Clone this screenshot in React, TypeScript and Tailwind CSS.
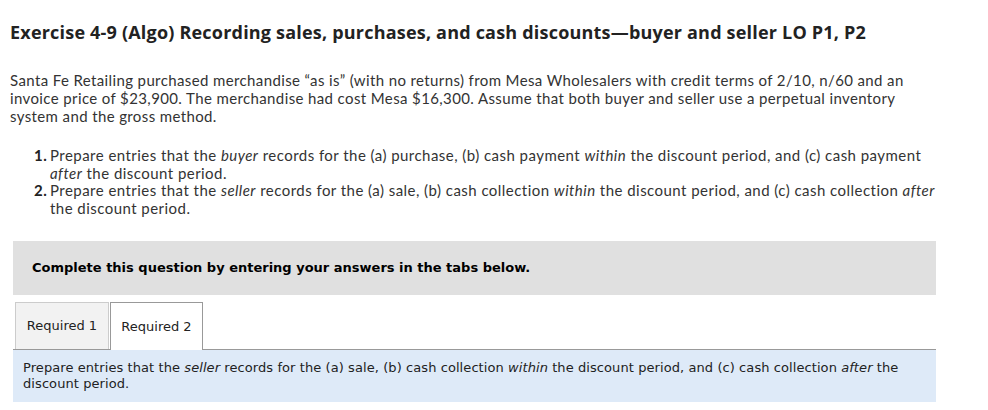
export default function App() {
  const top = { fontFamily: "Lato, 'Open Sans', sans-serif" };
  const verdana = { fontFamily: "Verdana, 'DejaVu Sans', sans-serif" };

  return (
    <div className="w-[988px] h-[410px] bg-white overflow-hidden text-[#1a1a1a]">
      <div className="pl-[10px] pr-[10px] whitespace-nowrap" style={top}>
        {/* Heading */}
        <h1 className="pt-[21px] text-[18px] leading-[22px] font-bold tracking-[0.2px] text-[#222] font-['Open_Sans',sans-serif]">
          Exercise 4-9 (Algo) Recording sales, purchases, and cash discounts—buyer and seller LO P1, P2
        </h1>

        {/* Problem text */}
        <p className="mt-[28px] text-[15px] leading-[18px] tracking-[0.38px] text-[#333]">
          Santa Fe Retailing purchased merchandise “as is” (with no returns) from Mesa Wholesalers with credit terms of 2/10, n/60 and an
          <br />
          invoice price of $23,900. The merchandise had cost Mesa $16,300. Assume that both buyer and seller use a perpetual inventory
          <br />
          system and the gross method.
        </p>

        <ol className="mt-[22px] pl-[40px] text-[15px] leading-[17.7px] tracking-[0.46px] text-[#333]">
          <li className="flex">
            <span className="w-[0px] -ml-[16px] mr-[16px] font-bold text-[#222]">1.</span>
            <span>
              Prepare entries that the <em>buyer</em> records for the (a) purchase, (b) cash payment <em>within</em> the discount period, and (c) cash payment
              <br />
              <em>after</em> the discount period.
            </span>
          </li>
          <li className="flex">
            <span className="w-[0px] -ml-[16px] mr-[16px] font-bold text-[#222]">2.</span>
            <span>
              Prepare entries that the <em>seller</em> records for the (a) sale, (b) cash collection <em>within</em> the discount period, and (c) cash collection <em>after</em>
              <br />
              the discount period.
            </span>
          </li>
        </ol>
      </div>

      <div className="ml-[13px] w-[923px]" style={verdana}>
        {/* Instruction banner */}
        <div className="mt-[23px] h-[54px] bg-[#e0e0e0] flex items-center pl-[19px]">
          <span className="text-[13px] font-bold text-black">Complete this question by entering your answers in the tabs below.</span>
        </div>

        {/* Tabs */}
        <div className="mt-[7px] flex items-end border-b border-[#999] pl-[2px] h-[48px]">
          <div className="h-[47px] w-[94px] bg-[#f2f2f2] border border-b-0 border-[#ccc] flex items-center justify-center text-[13px] text-[#222]">
            Required 1
          </div>
          <div className="h-[48px] w-[93px] ml-[1px] -mb-[1px] bg-white border border-b-0 border-[#999] flex items-center justify-center text-[13px] text-[#222]">
            Required 2
          </div>
        </div>

        {/* Tab content */}
        <div className="bg-[#deeaf8] px-[10px] pt-[10px] pb-[10px] text-[13px] leading-[16px] tracking-[0.08px] text-[#222]">
          Prepare entries that the <em>seller</em> records for the (a) sale, (b) cash collection <em>within</em> the discount period, and (c) cash collection <em>after</em> the
          <br />
          discount period.
        </div>
      </div>
    </div>
  );
}
